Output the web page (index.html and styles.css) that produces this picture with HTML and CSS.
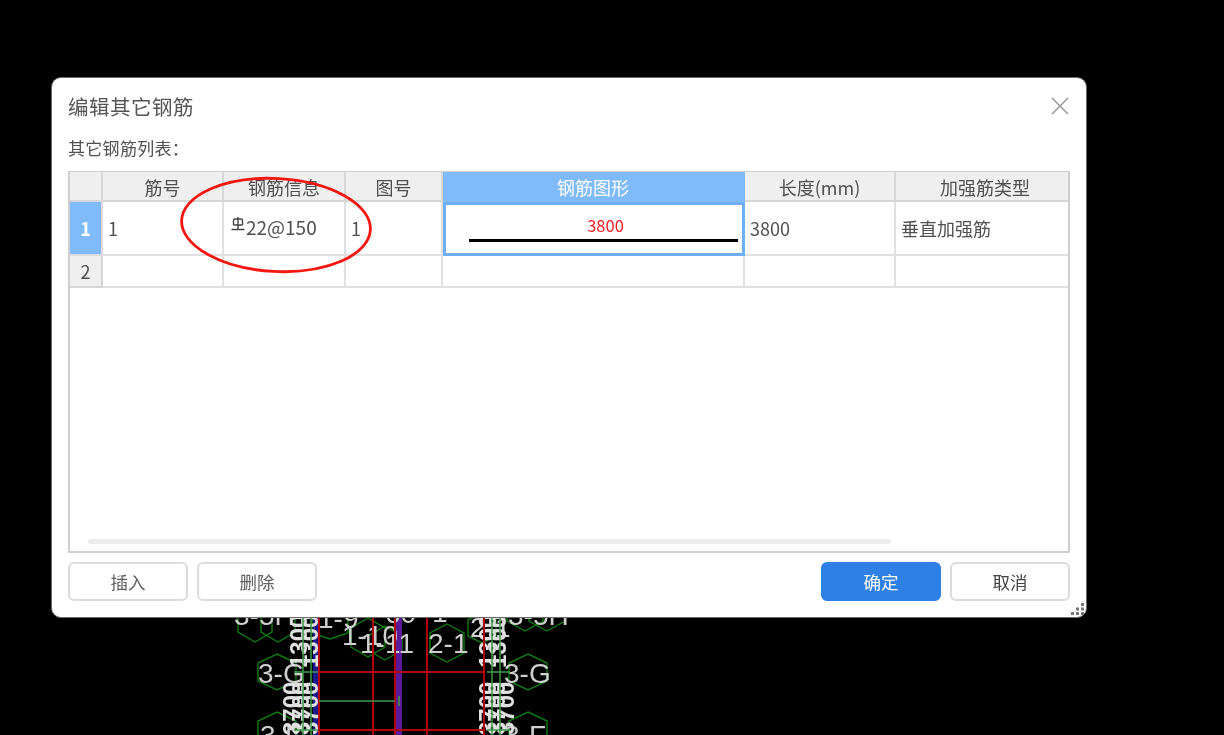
FILE: index.html
```html
<!DOCTYPE html>
<html lang="zh-CN">
<head>
<meta charset="utf-8">
<title>编辑其它钢筋</title>
<link rel="stylesheet" href="styles.css">
</head>
<body>
<svg class="cad" viewBox="0 600 1224 135" width="1224" height="135">
  <g class="hex">
    <path d="M255 603l17 10v19l-17 10-17-10v-19z"/>
    <path d="M278 603l17 10v19l-17 10-17-10v-19z"/>
    <path d="M330 603l18 10v20l-18 6-18-6v-20z"/>
    <path d="M368 618l17 10v19l-17 10-17-10v-19z"/>
    <path d="M385 626l17 10v14l-17 10-17-10v-14z"/>
    <path d="M447 624l17 9v20l-17 9-17-9v-20z"/>
    <path d="M482 613l14 7v16l-14 7-14-7v-16z"/>
    <path d="M525 603l18 10v8l-18 10-18-10v-8z"/>
    <path d="M547 603l18 10v8l-18 10-18-10v-8z"/>
    <path d="M277 654l19 9v18l-19 9-19-9v-18z"/>
    <path d="M528 654l19 9v18l-19 9-19-9v-18z"/>
    <path d="M277 712l19 9v18l-19 9-19-9v-18z"/>
    <path d="M528 712l19 9v18l-19 9-19-9v-18z"/>
  </g>
  <rect class="blue" x="313" y="617" width="5" height="118"/>
  <rect class="purple" x="396" y="617" width="6" height="118"/>
  <g class="cadtext">
    <text x="234" y="625">3-5H</text>
    <text x="318" y="628">1-9</text>
    <text x="342" y="645">1-10</text>
    <text x="360" y="653">1-11</text>
    <text x="428" y="653">2-1</text>
    <text x="470" y="637">2-1</text>
    <text x="385" y="623">60</text>
    <text x="432" y="622">1</text>
    <text x="508" y="625">3-5H</text>
    <text x="258" y="683">3-G</text>
    <text x="504" y="683">3-G</text>
    <text x="260" y="745">3-F</text>
    <text x="504" y="745">3-F</text>
  </g>
  <g class="cadstack">
    <text transform="translate(307 668) rotate(-90)">1300</text>
    <text transform="translate(318 668) rotate(-90)">1300</text>
    <text transform="translate(300 735) rotate(-90)">3700</text>
    <text transform="translate(309 735) rotate(-90)">3700</text>
    <text transform="translate(318 735) rotate(-90)">3700</text>
    <text transform="translate(496 668) rotate(-90)">1300</text>
    <text transform="translate(506 668) rotate(-90)">1300</text>
    <text transform="translate(496 735) rotate(-90)">3700</text>
    <text transform="translate(505 735) rotate(-90)">3700</text>
    <text transform="translate(514 735) rotate(-90)">3700</text>
  </g>
  <path class="red" d="M319 617V735M373 617V735M395 617V735M427 617V735M484 617V735M319 672H484M319 730H484"/>
  <path class="green" d="M303 617V735M311 617V735M492 617V735M500 617V735M319 701H395M399 696V706M294 672H318M294 730H318M487 672H510M487 730H510"/>
</svg>

<div class="dialog">
  <div class="titlebar">
    <span class="title">编辑其它钢筋</span>
    <svg class="close" viewBox="0 0 18 18" width="18" height="18"><path d="M1 1L17 17M17 1L1 17"/></svg>
  </div>
  <div class="listlabel">其它钢筋列表：</div>
  <div class="table">
    <div class="grid head">
      <div class="cell"></div>
      <div class="cell">筋号</div>
      <div class="cell">钢筋信息</div>
      <div class="cell">图号</div>
      <div class="cell active">钢筋图形</div>
      <div class="cell">长度(mm)</div>
      <div class="cell last">加强筋类型</div>
    </div>
    <div class="grid row1">
      <div class="cell rowhead active">1</div>
      <div class="cell body">1</div>
      <div class="cell body info">
        <svg class="rebar" viewBox="0 0 14 14" width="14" height="14"><path d="M2.5 8V3.5Q2.500 2 4 2H10Q11.500 2 11.500 3.500V8M2.500 8H11.500M7 0V12M0.500 12.500H13.500"/></svg><span>22@150</span>
      </div>
      <div class="cell body">1</div>
      <div class="cell shape">
        <span class="dim">3800</span>
        <span class="bar"></span>
      </div>
      <div class="cell body">3800</div>
      <div class="cell body">垂直加强筋</div>
    </div>
    <div class="grid row2">
      <div class="cell rowhead">2</div>
      <div class="cell"></div>
      <div class="cell"></div>
      <div class="cell"></div>
      <div class="cell"></div>
      <div class="cell"></div>
      <div class="cell"></div>
    </div>
    <div class="scrolltrack"><div class="scrollthumb"></div></div>
  </div>
  <div class="actions">
    <button class="btn">插入</button>
    <button class="btn">删除</button>
    <span class="spacer"></span>
    <button class="btn primary">确定</button>
    <button class="btn dark">取消</button>
  </div>
  <svg class="grip" viewBox="0 0 13 13" width="13" height="13">
    <rect x="10" y="1" width="3" height="3"/>
    <rect x="5" y="5.500" width="3" height="3"/><rect x="10" y="5.500" width="3" height="3"/>
    <rect x="0" y="10" width="3" height="3"/><rect x="5" y="10" width="3" height="3"/><rect x="10" y="10" width="3" height="3"/>
  </svg>
</div>

<svg class="mark" viewBox="0 0 200 104" width="200" height="104">
  <ellipse cx="100" cy="52" rx="94.500" ry="46.500" transform="rotate(3 100 52)"/>
</svg>
</body>
</html>
```
FILE: styles.css
```css
* { box-sizing: border-box; }
html, body { margin: 0; height: 100%; }
body {
  background: #000;
  overflow: hidden;
  position: relative;
  width: 1224px;
  height: 735px;
  font-family: "Noto Sans CJK SC", "Noto Sans", sans-serif;
  color: #505050;
}

/* CAD drawing behind the dialog */
.cad { position: absolute; left: 0; top: 600px; filter: blur(.5px); }
.hex path { fill: none; stroke: #0c7a0c; stroke-width: 1.4; }
.blue { fill: #1a1a8c; }
.purple { fill: #5a189a; }
.red { fill: none; stroke: #b00008; stroke-width: 2; }
.green { fill: none; stroke: #3f9a4a; stroke-width: 1.5; }
.cadtext text { font-family: "Liberation Sans", sans-serif; font-size: 28px; fill: #cfcfcf; }
.cadstack text { font-family: "Liberation Sans", sans-serif; font-size: 24px; font-weight: 700; fill: #e0e0e0; }

/* Dialog window */
.dialog {
  position: absolute;
  left: 51px;
  top: 77px;
  width: 1036px;
  height: 541px;
  background: #fff;
  border: 1px solid #6b6b6b;
  border-radius: 10px;
  padding: 0 16px;
  display: flex;
  flex-direction: column;
  filter: blur(.35px);
}
.titlebar {
  height: 55px;
  display: flex;
  align-items: center;
  justify-content: space-between;
}
.title { font-size: 20.500px; letter-spacing: .5px; color: #555; }
.close { margin-right: 1px; }
.close path { fill: none; stroke: #9a9a9a; stroke-width: 1.6; }
.listlabel {
  height: 38px;
  line-height: 30px;
  font-size: 17px;
  letter-spacing: .3px;
}

/* Table */
.table {
  width: 1002px;
  height: 382px;
  border: 2px solid #cfcfcf;
  border-top-width: 1px;
  display: flex;
  flex-direction: column;
  font-size: 18px;
}
.grid {
  display: grid;
  grid-template-columns: 33px 121px 122px 97px 302px 151px 1fr;
}
.head { height: 30px; }
.row1 { height: 54px; }
.row2 { height: 32px; }
.cell {
  border-right: 2px solid #e0e0e0;
  border-bottom: 2px solid #e0e0e0;
  display: flex;
  align-items: center;
  min-width: 0;
}
.cell:last-child { border-right: 0; }
.head .cell {
  background: #efefef;
  justify-content: center;
  line-height: 1;
  padding-top: 2px;
  border-color: #d6d6d6;
}
.head .cell.last { padding-left: 6px; }
.head .cell.active { background: #7fbafb; color: #fff; border-color: #7fbafb; }
.rowhead {
  background: #efefef;
  justify-content: center;
  border-color: #d6d6d6;
}
.rowhead.active { background: #7fbafb; color: #fff; font-weight: 700; border-color: #dcdcdc; }
.body { padding-left: 5px; }
.info { gap: 1px; padding-bottom: 3px; padding-left: 7px; font-size: 19px; }
.rebar { flex: none; margin-bottom: 5px; }
.rebar path { fill: none; stroke: #444; stroke-width: 1.4; }
.shape {
  border: 3px solid #6fb0f5;
  flex-direction: column;
  align-items: stretch;
  padding: 8px 4px 0 23px;
}
.dim {
  font-size: 16.500px;
  color: #f01c22;
  line-height: 24px;
  text-align: center;
  padding-left: 4px;
}
.bar { display: block; height: 3px; background: #000; margin-top: 2px; }
.scrolltrack { margin-top: auto; padding: 0 0 7px 18px; }
.scrollthumb { width: 803px; height: 5px; border-radius: 3px; background: #ececec; }

/* Buttons */
.actions {
  display: flex;
  gap: 9px;
  margin-top: 9px;
  width: 1002px;
}
.spacer { flex: 1; }
.btn {
  width: 120px;
  height: 39px;
  border: 2px solid #dcdcdc;
  border-radius: 6px;
  background: #fff;
  color: #606060;
  font: 17.500px "Noto Sans CJK SC", "Noto Sans", sans-serif;
  padding: 0;
}
.btn.primary { background: #2e80e4; border-color: #2e80e4; color: #fff; }
.btn.dark { color: #444; }
.grip { position: absolute; right: 2px; bottom: 2px; }
.grip rect { fill: #777; }

/* Red hand-drawn ring over the table */
.mark { position: absolute; left: 176px; top: 173px; }
.mark ellipse { fill: none; stroke: #f2160f; stroke-width: 2.800; }
```
